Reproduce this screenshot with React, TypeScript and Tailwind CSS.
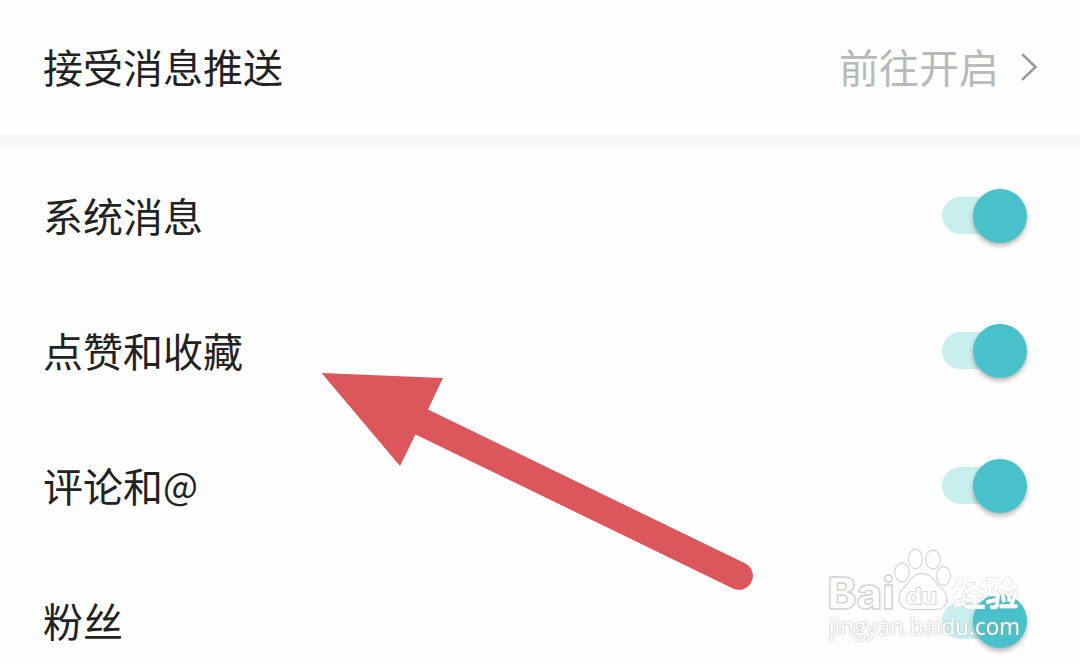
import React from "react";

const rows = [
  { label: "系统消息" },
  { label: "点赞和收藏" },
  { label: "评论和", suffix: "@" },
  { label: "粉丝" },
];

function Toggle() {
  return (
    <span role="switch" aria-checked="true" className="relative flex h-[54px] w-[85px] items-center justify-end">
      <span className="absolute left-0 h-[37px] w-[70px] rounded-full bg-[#c9eeee]" />
      <span className="relative size-[54px] rounded-full bg-[#48c1ca] shadow-[0_3px_5px_rgba(0,0,0,0.28)]" />
    </span>
  );
}

function SettingRow({ label, suffix }: { label: string; suffix?: string }) {
  return (
    <li className="flex h-[135px] shrink-0 items-center justify-between pl-[43px] pr-[52.6px]">
      <span className="text-[40px] leading-[58px] relative top-[-1px]">
        {label}
        {suffix && <span className="relative top-[-2px] text-[37px] leading-none">{suffix}</span>}
      </span>
      <Toggle />
    </li>
  );
}

function Arrow() {
  return (
    <svg className="pointer-events-none absolute left-0 top-0" width="1080" height="664" viewBox="0 0 1080 664" fill="#dc575c">
      <path d="M321.5 373 L443 378 L428 409.5 L745 563.3 A13.8 13.8 0 0 1 733 588.4 L415.5 434.5 L400 466 Z" />
    </svg>
  );
}

function Watermark() {
  return (
    <svg
      className="pointer-events-none absolute left-[820px] top-[540px]"
      width="220"
      height="124"
      viewBox="0 0 220 124"
      fill="#fff"
      stroke="#d9d9d9"
      strokeWidth="1.3"
      strokeLinejoin="round"
    >
      <text x="7.500" y="69" textLength="67" lengthAdjust="spacingAndGlyphs" stroke="#d2d2d2" strokeWidth="1.4" className="font-['Inter',sans-serif] text-[44px] font-extrabold">Bai</text>
      <ellipse cx="82" cy="32.5" rx="7.3" ry="9.5" />
      <ellipse cx="95.5" cy="19" rx="7" ry="9.8" />
      <ellipse cx="113" cy="19.5" rx="7.3" ry="9.5" />
      <ellipse cx="123.5" cy="36" rx="7" ry="9.5" />
      <path d="M102 33.5 C94 33.5 90 40 87 44.5 C83 49 79 51 79 58 C79 65 84 69.5 91 69.5 L116 69.5 C123 69.5 127.5 65 127 58 C126.500 51 121 49 117 44 C113 38.500 110 33.5 102 33.5Z" />
      <text x="86" y="63.500" textLength="31" lengthAdjust="spacingAndGlyphs" strokeWidth="2" paintOrder="stroke" className="font-['Liberation_Sans',sans-serif] text-[22px] font-bold">du</text>
      <text x="132.500" y="66" textLength="66" lengthAdjust="spacingAndGlyphs" stroke="#fff" strokeWidth="0.6" className="font-['Noto_Sans_CJK_SC',sans-serif] text-[34px] font-bold [filter:drop-shadow(0_0_0.7px_#999)]">经验</text>
      <text x="9" y="94.500" textLength="191" lengthAdjust="spacingAndGlyphs" stroke="none" className="font-['Open_Sans',sans-serif] text-[24px] font-medium [filter:drop-shadow(0_0_0.8px_#aaa)]">jingyan.baidu.com</text>
    </svg>
  );
}

export default function App() {
  return (
    <main className="relative flex h-[664px] w-[1080px] flex-col overflow-hidden bg-[#fefefe] font-['Noto_Sans_CJK_SC',sans-serif] text-[#222]">
      <header className="flex h-[134px] shrink-0 items-center justify-between pl-[43px] pr-[42px]">
        <span className="text-[40px] leading-[58px] relative top-[-1px]">接受消息推送</span>
        <span className="flex items-center gap-[22px]">
          <span className="text-[40px] leading-[58px] relative top-[-1px] text-[#b9b9b9]">前往开启</span>
          <svg width="17" height="28" viewBox="0 0 17 28" fill="none" stroke="#999" strokeWidth="2.6" strokeLinecap="square">
            <path d="M2 2 L14.500 14 L2 26" />
          </svg>
        </span>
      </header>
      <div className="h-[14px] shrink-0 bg-[#f7f7f7]" />
      <ul className="flex flex-col">
        {rows.map((row) => (
          <SettingRow key={row.label} {...row} />
        ))}
      </ul>
      <Arrow />
      <Watermark />
    </main>
  );
}
